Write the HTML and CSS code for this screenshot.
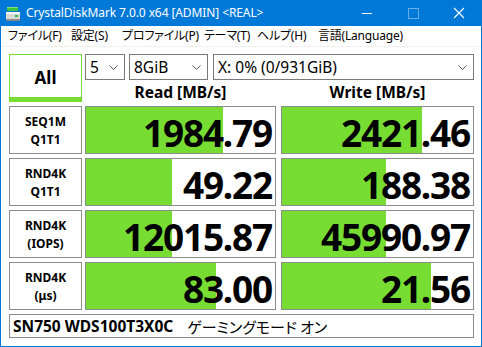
FILE: index.html
```html
<!DOCTYPE html>
<html>
<head>
<meta charset="utf-8">
<link rel="stylesheet" href="styles.css">
</head>
<body>
<div class="window">
  <div class="titlebar">
    <svg class="appicon" width="16" height="16" viewBox="0 0 16 16">
      <rect x="2" y="1" width="11" height="4" fill="#3cc43c"/>
      <rect x="2" y="1" width="11" height="1" fill="#7fe07f"/>
      <rect x="1" y="6" width="14" height="9" rx="1" fill="#d8d8d8"/>
      <rect x="1" y="6" width="14" height="2" fill="#f4f4f4"/>
      <rect x="1" y="13" width="14" height="2" fill="#8a8a8a"/>
      <rect x="10" y="9" width="3" height="2" fill="#39b54a"/>
    </svg>
    <span class="title">CrystalDiskMark 7.0.0 x64 [ADMIN] &lt;REAL&gt;</span>
    <div class="controls">
      <svg class="ctl" width="46" height="26" viewBox="0 0 46 26"><line x1="18" y1="13.5" x2="28" y2="13.5" stroke="#fff" stroke-width="1"/></svg>
      <svg class="ctl" width="46" height="26" viewBox="0 0 46 26"><rect x="18.5" y="8.5" width="10" height="10" fill="none" stroke="#6aaee8" stroke-width="1"/></svg>
      <svg class="ctl" width="46" height="26" viewBox="0 0 46 26"><path d="M18 8 L28 18 M28 8 L18 18" stroke="#fff" stroke-width="1.1"/></svg>
    </div>
  </div>
  <div class="menubar">
    <span class="m1">ファイル(F)</span>
    <span class="m2">設定(S)</span>
    <span class="m3">プロファイル(P)</span>
    <span class="m4">テーマ(T)</span>
    <span class="m5">ヘルプ(H)</span>
    <span class="m6">言語(Language)</span>
  </div>
  <div class="client">
    <div class="top">
      <div class="allbtn">All</div>
      <div class="topright">
        <div class="selects">
          <div class="sel s1"><span>5</span><svg class="chev" width="9" height="6" viewBox="0 0 9 6"><path d="M0.5 0.5 L4.5 4.5 L8.5 0.5" fill="none" stroke="#555" stroke-width="1"/></svg></div>
          <div class="sel s2"><span>8GiB</span><svg class="chev" width="9" height="6" viewBox="0 0 9 6"><path d="M0.5 0.5 L4.5 4.5 L8.5 0.5" fill="none" stroke="#555" stroke-width="1"/></svg></div>
          <div class="sel s3"><span>X: 0% (0/931GiB)</span><svg class="chev" width="9" height="6" viewBox="0 0 9 6"><path d="M0.5 0.5 L4.5 4.5 L8.5 0.5" fill="none" stroke="#555" stroke-width="1"/></svg></div>
        </div>
        <div class="headers">
          <div class="hread">Read [MB/s]</div>
          <div class="hwrite">Write [MB/s]</div>
        </div>
      </div>
    </div>

    <div class="row">
      <div class="label">SEQ1M<br>Q1T1</div>
      <div class="meter read"><div class="fill" style="width:137px"></div><span class="val">1984.79</span></div>
      <div class="meter write"><div class="fill" style="width:140px"></div><span class="val">2421.46</span></div>
    </div>
    <div class="row">
      <div class="label">RND4K<br>Q1T1</div>
      <div class="meter read"><div class="fill" style="width:86px"></div><span class="val">49.22</span></div>
      <div class="meter write"><div class="fill" style="width:104px"></div><span class="val">188.38</span></div>
    </div>
    <div class="row">
      <div class="label">RND4K<br>(IOPS)</div>
      <div class="meter read"><div class="fill" style="width:86px"></div><span class="val">12015.87</span></div>
      <div class="meter write"><div class="fill" style="width:104px"></div><span class="val">45990.97</span></div>
    </div>
    <div class="row">
      <div class="label">RND4K<br>(μs)</div>
      <div class="meter read"><div class="fill" style="width:130px"></div><span class="val">83.00</span></div>
      <div class="meter write"><div class="fill" style="width:149px"></div><span class="val">21.56</span></div>
    </div>

    <div class="comment"><b>SN750 WDS100T3X0C</b><span class="jp">ゲーミングモード オン</span></div>
  </div>
</div>
</body>
</html>
```
FILE: styles.css
```css
* { box-sizing: border-box; }
html, body { margin: 0; padding: 0; }
body {
  width: 482px;
  height: 347px;
  overflow: hidden;
  font-family: "Noto Sans", "Noto Sans CJK JP", sans-serif;
}
.window {
  width: 482px;
  height: 347px;
  border: 1px solid #0078d7;
  border-top: none;
  background: #fff;
  display: flex;
  flex-direction: column;
}
.titlebar {
  height: 26px;
  margin: 0 -1px;
  background: #0078d7;
  display: flex;
  align-items: center;
  color: #fff;
}
.appicon { margin-left: 5px; margin-top: 1px; }
.title {
  margin-left: 5px;
  font-size: 12px;
  line-height: 26px;
  white-space: nowrap;
  letter-spacing: -0.1px;
}
.controls { margin-left: auto; display: flex; }
.ctl { display: block; }
.menubar {
  height: 21px;
  border-bottom: 1px solid #f0f0f0;
  display: flex;
  align-items: center;
  font-family: "Noto Sans", "Noto Sans CJK JP", sans-serif;
  font-feature-settings: "palt";
  font-size: 12px;
  color: #000;
  padding-left: 7px;
}
.menubar span { white-space: nowrap; line-height: 20px; flex-shrink: 0; letter-spacing: -0.2px; }
.m1 { width: 63px; }
.m2 { width: 51px; }
.m3 { width: 82px; }
.m4 { width: 53px; }
.m5 { width: 61px; }
.client {
  padding: 7px 0 0 8px;
}
.top { display: flex; height: 48px; }
.allbtn {
  width: 73px;
  height: 48px;
  border: 1px solid #77dd33;
  border-bottom: 5px solid #77dd33;
  font-weight: 700;
  font-size: 17px;
  display: flex;
  align-items: center;
  justify-content: center;
  padding-top: 2px;
}
.topright { margin-left: 3px; width: 389px; display: flex; flex-direction: column; }
.selects { display: flex; height: 26px; }
.sel {
  height: 26px;
  border: 1px solid #7a7a7a;
  background: #fff;
  display: flex;
  align-items: center;
  padding: 0 6px 0 4px;
  font-size: 15.5px;
  color: #000;
  white-space: nowrap;
}
.sel span { flex: 1; line-height: 24px; }
.chev { display: block; margin-top: 1px; }
.s1 { width: 40px; }
.s2 { width: 79px; margin-left: 4px; }
.s3 { width: 261px; margin-left: 5px; }
.headers { display: flex; height: 22px; align-items: center; font-weight: 700; font-size: 15.5px; }
.hread { width: 191px; text-align: center; padding-top: 2px; }
.hwrite { width: 193px; margin-left: 5px; text-align: center; padding-top: 2px; }
.row { display: flex; height: 48px; margin-top: 4px; }
.label {
  width: 73px;
  border: 1px solid #8c8c8c;
  font-weight: 700;
  font-size: 12px;
  line-height: 18px;
  text-align: center;
  display: flex;
  align-items: center;
  justify-content: center;
  padding-top: 1px;
}
.meter {
  position: relative;
  border: 1px solid #8c8c8c;
  background: #fff;
  display: flex;
  align-items: center;
  justify-content: flex-end;
  padding-right: 2px;
}
.meter.read { width: 191px; margin-left: 3px; }
.meter.write { width: 193px; margin-left: 5px; }
.fill { position: absolute; left: 0; top: 0; bottom: 0; background: #77dd33; }
.val {
  position: relative;
  font-weight: 700;
  font-size: 37px;
  line-height: 40px;
  margin-top: 5px;
  letter-spacing: -1.2px;
  padding-right: 1px;
  color: #000;
  white-space: nowrap;
}
.comment {
  margin-top: 4px;
  width: 465px;
  height: 24px;
  border: 1px solid #8c8c8c;
  display: flex;
  align-items: center;
  padding-left: 3px;
  font-size: 15.5px;
  white-space: nowrap;
}
.comment b { font-weight: 700; }
.comment .jp { margin-left: 14px; font-family: "Noto Sans CJK JP", sans-serif; font-feature-settings: "palt"; font-weight: 400; font-size: 15px; }
```
